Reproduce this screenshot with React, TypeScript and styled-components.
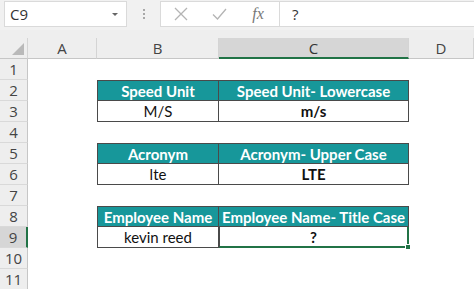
import React from "react";
import styled, { createGlobalStyle } from "styled-components";

const GlobalStyle = createGlobalStyle`
  html, body {
    margin: 0;
    padding: 0;
    background: #ffffff;
    font-family: "Open Sans", "Liberation Sans", sans-serif;
  }
  * {
    box-sizing: border-box;
  }
`;

const Page = styled.div`
  width: 474px;
  height: 289px;
  overflow: hidden;
  background: #ffffff;
`;

const FormulaBar = styled.div`
  display: flex;
  align-items: center;
  height: 30px;
  padding: 1px 0 3px 4px;
  background: #f1f1f1;
`;

const NameBox = styled.div`
  display: flex;
  align-items: center;
  justify-content: space-between;
  width: 123px;
  height: 26px;
  padding: 0 8px 0 5px;
  background: #ffffff;
  border: 1px solid #dadada;
  font-size: 15px;
  color: #333333;
`;

const Caret = styled.span`
  width: 0;
  height: 0;
  border-left: 3px solid transparent;
  border-right: 3px solid transparent;
  border-top: 3px solid #666666;
`;

const Dots = styled.div`
  display: flex;
  flex-direction: column;
  gap: 2px;
  width: 33px;
  align-items: center;
`;

const Dot = styled.span`
  width: 2px;
  height: 2px;
  background: #a8a8a8;
`;

const FormulaBox = styled.div`
  display: flex;
  align-items: center;
  flex: 1;
  height: 26px;
  background: #ffffff;
  border: 1px solid #dadada;
  border-right: none;
`;

const IconSlot = styled.div<{ $w: number }>`
  display: flex;
  align-items: center;
  justify-content: center;
  width: ${(p) => p.$w}px;
  height: 100%;
`;

const Fx = styled.span`
  font-family: "Liberation Serif", serif;
  font-style: italic;
  font-size: 16px;
  color: #777777;
`;

const Separator = styled.div`
  width: 1px;
  height: 100%;
  background: #dadada;
`;

const FormulaText = styled.div`
  padding-left: 12px;
  font-size: 15px;
  color: #333333;
`;

const Band = styled.div`
  height: 8px;
  background: #eeeeee;
`;

const Sheet = styled.div`
  display: grid;
  grid-template-columns: 28px 69px 122px 190px 65px;
  grid-template-rows: 21px;
  grid-auto-rows: 21px;
`;

const Corner = styled.div`
  position: relative;
  background: #eeeeee;
  border-right: 1px solid #d4d4d4;
  border-bottom: 1px solid #c6c6c6;
`;

const CornerTriangle = styled.span`
  position: absolute;
  right: 3px;
  bottom: 3px;
  width: 0;
  height: 0;
  border-left: 12px solid transparent;
  border-bottom: 12px solid #b9b9b9;
`;

const ColHeader = styled.div<{ $active?: boolean }>`
  display: flex;
  align-items: center;
  justify-content: center;
  font-size: 15px;
  color: ${(p) => (p.$active ? "#333333" : "#444444")};
  background: ${(p) => (p.$active ? "#d6d6d6" : "#eeeeee")};
  border-right: 1px solid #d4d4d4;
  border-bottom: ${(p) => (p.$active ? "2px solid #217346" : "1px solid #c6c6c6")};
`;

const RowHeader = styled.div<{ $active?: boolean }>`
  display: flex;
  align-items: center;
  justify-content: center;
  font-size: 15px;
  color: #444444;
  background: ${(p) => (p.$active ? "#d6d6d6" : "#eeeeee")};
  border-bottom: 1px solid #d9d9d9;
  border-right: ${(p) => (p.$active ? "2px solid #217346" : "1px solid #c6c6c6")};
`;

const Cell = styled.div`
  background: #ffffff;
`;

const TableCell = styled.div<{ $head?: boolean; $first?: boolean; $bold?: boolean }>`
  display: flex;
  align-items: center;
  justify-content: center;
  font-family: "Lato", "Open Sans", sans-serif;
  font-size: 15px;
  font-weight: ${(p) => (p.$head || p.$bold ? 700 : 400)};
  color: ${(p) => (p.$head ? "#ffffff" : "#111111")};
  background: ${(p) => (p.$head ? "#17979a" : "#ffffff")};
  border-right: 1px solid #4a4a4a;
  border-bottom: 1px solid #4a4a4a;
  border-left: ${(p) => (p.$first ? "1px solid #4a4a4a" : "none")};
  border-top: ${(p) => (p.$head ? "1px solid #4a4a4a" : "none")};
`;

const SelectedCell = styled(TableCell)`
  position: relative;
  border: 2px solid #217346;
  border-top: none;
  border-left: 1px solid #4a4a4a;
`;

const FillHandle = styled.span`
  position: absolute;
  right: -4px;
  bottom: -4px;
  width: 6px;
  height: 6px;
  background: #217346;
  border: 1px solid #ffffff;
`;

const CloseIcon = () => (
  <svg width="14" height="14" viewBox="0 0 14 14">
    <path d="M1 1 L13 13 M13 1 L1 13" stroke="#b4b4b4" strokeWidth="1.3" fill="none" />
  </svg>
);

const CheckIcon = () => (
  <svg width="15" height="12" viewBox="0 0 15 12">
    <path d="M1 6.5 L5.5 11 L14 1" stroke="#b4b4b4" strokeWidth="1.3" fill="none" />
  </svg>
);

type Row = { head: [string, string]; value: [string, string] };

const tables: Row[] = [
  { head: ["Speed Unit", "Speed Unit- Lowercase"], value: ["M/S", "m/s"] },
  { head: ["Acronym", "Acronym- Upper Case"], value: ["lte", "LTE"] },
  { head: ["Employee Name", "Employee Name- Title Case"], value: ["kevin reed", "?"] },
];

const App = () => {
  const rows: React.ReactNode[] = [];
  for (let r = 1; r <= 11; r++) {
    const tIndex = [2, 5, 8].indexOf(r);
    const vIndex = [3, 6, 9].indexOf(r);
    rows.push(
      <RowHeader key={`h${r}`} $active={r === 9}>
        {r}
      </RowHeader>
    );
    rows.push(<Cell key={`a${r}`} />);
    if (tIndex >= 0) {
      const t = tables[tIndex];
      rows.push(
        <TableCell key={`b${r}`} $head $first>
          {t.head[0]}
        </TableCell>
      );
      rows.push(
        <TableCell key={`c${r}`} $head>
          {t.head[1]}
        </TableCell>
      );
    } else if (vIndex >= 0) {
      const t = tables[vIndex];
      rows.push(
        <TableCell key={`b${r}`} $first>
          {t.value[0]}
        </TableCell>
      );
      if (r === 9) {
        rows.push(
          <SelectedCell key={`c${r}`} $bold>
            {t.value[1]}
            <FillHandle />
          </SelectedCell>
        );
      } else {
        rows.push(
          <TableCell key={`c${r}`} $bold>
            {t.value[1]}
          </TableCell>
        );
      }
    } else {
      rows.push(<Cell key={`b${r}`} />);
      rows.push(<Cell key={`c${r}`} />);
    }
    rows.push(<Cell key={`d${r}`} />);
  }

  return (
    <Page>
      <GlobalStyle />
      <FormulaBar>
        <NameBox>
          C9
          <Caret />
        </NameBox>
        <Dots>
          <Dot />
          <Dot />
          <Dot />
        </Dots>
        <FormulaBox>
          <IconSlot $w={40}>
            <CloseIcon />
          </IconSlot>
          <IconSlot $w={36}>
            <CheckIcon />
          </IconSlot>
          <IconSlot $w={42}>
            <Fx>fx</Fx>
          </IconSlot>
          <Separator />
          <FormulaText>?</FormulaText>
        </FormulaBox>
      </FormulaBar>
      <Band />
      <Sheet>
        <Corner>
          <CornerTriangle />
        </Corner>
        <ColHeader>A</ColHeader>
        <ColHeader>B</ColHeader>
        <ColHeader $active>C</ColHeader>
        <ColHeader>D</ColHeader>
        {rows}
      </Sheet>
    </Page>
  );
};

export default App;
